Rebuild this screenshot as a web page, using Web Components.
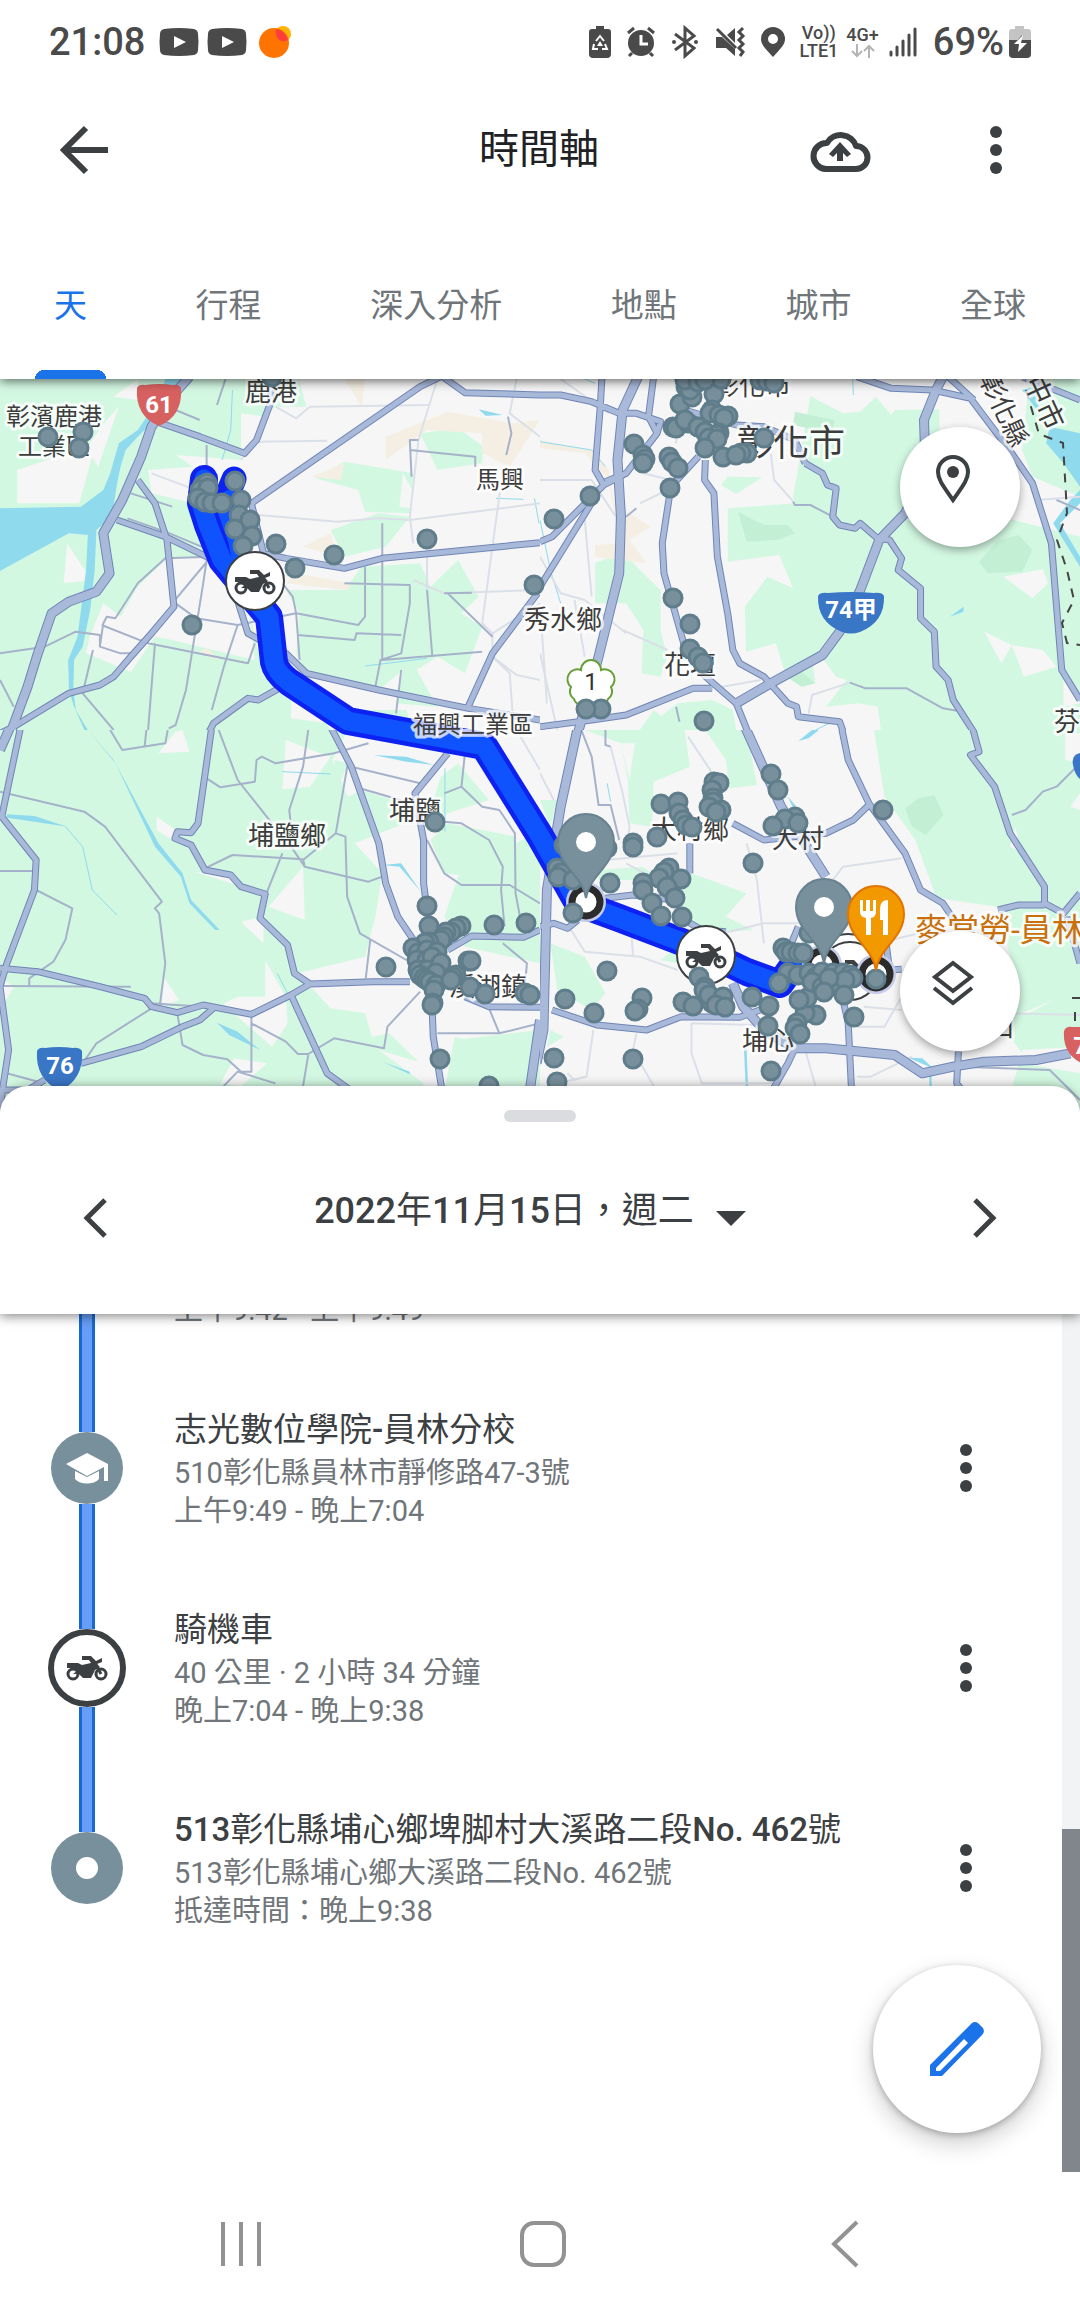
<!DOCTYPE html>
<html lang="zh-Hant">
<head>
<meta charset="utf-8">
<meta name="viewport" content="width=device-width, initial-scale=1">
<title>時間軸</title>
<style>
  body {
    margin: 0;
    min-height: 100vh;
    display: flex;
    flex-direction: column;
    background: #fff;
    color: #3c4043;
    font-family: Roboto, "Noto Sans CJK TC", sans-serif;
    overflow-x: hidden;
  }

  timeline-list {
    flex: 1;
  }

  /* figures are a step heavier than the han characters */
  b {
    font-weight: 500;
  }
</style>
</head>
<body>
<status-bar></status-bar>
<app-header>時間軸</app-header>
<tab-strip>
  <a href="#day" aria-current="page">天</a>
  <a href="#trips">行程</a>
  <a href="#insights">深入分析</a>
  <a href="#places">地點</a>
  <a href="#cities">城市</a>
  <a href="#world">全球</a>
</tab-strip>
<timeline-map></timeline-map>
<date-sheet><span><b>2022</b>年<b>11</b>月<b>15</b>日，週二</span></date-sheet>
<timeline-list>
  <timeline-stop kind="passed">
    <span slot="time">上午9:42 - 上午9:49</span>
  </timeline-stop>
  <timeline-stop kind="place" icon="school">
    <span slot="title">志光數位學院<b>-</b>員林分校</span>
    <span slot="detail">510彰化縣員林市靜修路47-3號</span>
    <span slot="time">上午9:49 - 晚上7:04</span>
  </timeline-stop>
  <timeline-stop kind="move" icon="moto">
    <span slot="title">騎機車</span>
    <span slot="detail">40 公里 · 2 小時 34 分鐘</span>
    <span slot="time">晚上7:04 - 晚上9:38</span>
  </timeline-stop>
  <timeline-stop kind="last" icon="dot">
    <span slot="title"><b>513</b>彰化縣埔心鄉埤脚村大溪路二段<b>No. 462</b>號</span>
    <span slot="detail">513彰化縣埔心鄉大溪路二段No. 462號</span>
    <span slot="time">抵達時間：晚上9:38</span>
  </timeline-stop>
</timeline-list>
<system-nav></system-nav>

<script>
// motorcycle artwork, shared by the list icon and the map markers (42 x 25)
const MOTO = `
  <g fill="none" stroke="#3c4043" stroke-width="3"><circle cx="7" cy="18" r="5"/><circle cx="35" cy="18" r="5"/><path d="M29 7l6 11"/></g>
  <path fill="#3c4043" d="M1 7h11l4 2 9-2-2-3h-7V0h9l5 5 6-3v4l-5 2 3 3-5 3-4 8h-8l-4-4h-6l4-3-4-3H1z"/>`;

// name: [width, height, content]
const ICONS = {
  back: [48, 48, '<path fill="none" stroke="#3c4043" stroke-width="6" d="M48 24H5M26 2 4 24l22 22"/>'],
  cloud: [60, 44, '<path fill="none" stroke="#3c4043" stroke-width="6" stroke-linejoin="round" d="M16 41h30a11 11 0 0 0 0-23A16 16 0 0 0 17 15 13 13 0 0 0 16 41z"/><path fill="#3c4043" d="M30 14 41 26l-4 3-4-4v8h-6v-8l-4 4-4-3z"/>'],
  more: [12, 48, '<g fill="#3c4043"><circle cx="6" cy="6" r="6"/><circle cx="6" cy="24" r="6"/><circle cx="6" cy="42" r="6"/></g>'],
  place: [34, 48, '<path fill="none" stroke="#3c4043" stroke-width="4" d="M17 45C8 32 2 25 2 17a15 15 0 0 1 30 0c0 8-6 15-15 28z"/><circle cx="17" cy="17" r="6" fill="#3c4043"/>'],
  layers: [42, 46, '<path fill="none" stroke="#3c4043" stroke-width="4" d="M21 3 39 17 21 31 3 17zM2 28l19 15 19-15"/>'],
  prev: [24, 40, '<path fill="none" stroke="#3c4043" stroke-width="5" d="M22 2 4 20l18 18"/>'],
  next: [24, 40, '<path fill="none" stroke="#3c4043" stroke-width="5" d="m2 2 18 18L2 38"/>'],
  caret: [30, 15, '<path fill="#3c4043" d="M0 0h30L15 15z"/>'],
  edit: [54, 54, '<path fill="#1a73e8" fill-rule="evenodd" d="M0 43 41 2c3-3 6-2 8 0l3 3c2 2 3 5 0 8L12 54H0zM6 46v3h4l28-28-4-4z"/>'],
  school: [42, 31, '<path fill="#fff" d="M21 0 42 11v17h-4V14L21 23 0 11z"/><path fill="#fff" d="M9 18v8c5 6 19 6 24 0v-8l-12 6z"/>'],
  moto: [42, 25, MOTO],
  dot: [22, 22, '<circle cx="11" cy="11" r="11" fill="#fff"/>'],
  video: [40, 28, '<path fill="#4a4a4a" d="M5 1q15-2 30 0 4 1 4 5 1 8 0 16 0 4-4 5-15 2-30 0-4-1-4-5-1-8 0-16 0-4 4-5z"/><path fill="#fff" d="m15 8 12 6-12 6z"/>'],
  peach: [32, 32, '<circle cx="24" cy="8" r="8" fill="#ffb400"/><circle cx="15" cy="17" r="15" fill="#ff7300"/><path fill="#ff3d3d" d="M17 3a15 15 0 0 1 12 11c-7 4-14-2-12-11z"/>'],
  recycle: [22, 32, '<path fill="#4a4a4a" d="M7 0h8v3h4q3 0 3 3v22q0 4-4 4H4q-4 0-4-4V6q0-3 3-3h4z"/><path fill="none" stroke="#fff" stroke-width="2" d="m7 15 4-5 4 5M5 18l-1 5h5m4 0h5l-2-5"/><path fill="#fff" d="m8 20 3-5 3 5z"/>'],
  alarm: [28, 30, '<circle cx="14" cy="16" r="13" fill="#4a4a4a"/><path fill="none" stroke="#4a4a4a" stroke-width="3" d="M1 6l6-5m14 0 6 5M5 26l-3 3m21-3 3 3"/><path fill="none" stroke="#fff" stroke-width="3" d="M14 8v9h7"/>'],
  bluetooth: [28, 32, '<path fill="none" stroke="#4a4a4a" stroke-width="3" d="m4 8 19 14-9 8V2l9 8L4 24"/><circle cx="3" cy="16" r="2" fill="#4a4a4a"/><circle cx="25" cy="16" r="2" fill="#4a4a4a"/>'],
  mute: [30, 30, '<path fill="#4a4a4a" d="M1 10h6L20 22v7l-9-8H1zM20 1v15l-8-8z"/><path fill="none" stroke="#4a4a4a" stroke-width="3" d="m2 2 19 19M28 1l-4 4 4 4-4 4 4 4-4 4 4 4-3 4"/>'],
  pin: [24, 30, '<path fill="#4a4a4a" fill-rule="evenodd" d="M12 30C5 22 0 18 0 12a12 12 0 0 1 24 0c0 6-5 10-12 18zM12 7a5 5 0 1 0 0 10 5 5 0 0 0 0-10z"/>'],
  arrows: [24, 14, '<path fill="none" stroke="#b4b4b4" stroke-width="2" d="M6 0v12M1 7l5 5 5-5M18 14V2M13 7l5-5 5 5"/>'],
  signal: [28, 30, '<path fill="none" stroke="#4a4a4a" stroke-width="3" stroke-linecap="round" d="M2 25v3M8 20v8M14 14v14M20 8v20M26 2v26"/>'],
  battery: [22, 32, '<path fill="#c4c4c4" d="M6 0h9v3h4q3 0 3 3v10H0V6q0-3 3-3h3z"/><path fill="#4a4a4a" d="M0 14h22v14q0 4-4 4H4q-4 0-4-4z"/><path fill="#4a4a4a" d="M13 9v6H8z"/><path fill="#fff" d="M14 9 5 18h5l-1 8 9-9h-6z"/>'],
  recents: [42, 46, '<path fill="none" stroke="#929292" stroke-width="4" d="M3 1v44M21 1v44M39 1v44"/>'],
  home: [46, 46, '<rect x="2" y="2" width="42" height="42" rx="12" fill="none" stroke="#929292" stroke-width="4"/>'],
  navback: [28, 48, '<path fill="none" stroke="#929292" stroke-width="4" d="M26 2 3 24l23 22"/>']
};

const BUTTON = `
  button, a {
    margin: 0;
    padding: 0;
    border: 0;
    background: none;
    font: inherit;
    color: inherit;
    cursor: pointer;
  }
`;

class UiIcon extends HTMLElement {
  constructor() {
    super();
    this.attachShadow({ mode: 'open' });
  }

  connectedCallback() {
    const [w, h, body] = ICONS[this.getAttribute('name')];
    this.shadowRoot.innerHTML = `
      <style>
        :host { display: block; flex: none; }
        svg { display: block; overflow: visible; }
      </style>
      <svg width="${w}" height="${h}" viewBox="0 0 ${w} ${h}" aria-hidden="true">${body}</svg>
    `;
  }
}
customElements.define('ui-icon', UiIcon);

class StatusBar extends HTMLElement {
  constructor() {
    super();
    this.attachShadow({ mode: 'open' }).innerHTML = `
      <style>
        :host {
          display: flex;
          align-items: center;
          justify-content: space-between;
          height: 84px;
          padding: 0 49px;
          color: #4a4a4a;
          font-size: 38px;
          font-weight: 500;
        }
        div { display: flex; align-items: center; }
        .left { gap: 12px; }
        .left span { margin-right: 2px; }
        .video { gap: 8px; }
        .right { gap: 16px; }
        .net {
          flex-direction: column;
          margin: 0 -6px 0 -2px;
          font-size: 18px;
          line-height: 18px;
        }
        .charge { gap: 5px; }
      </style>
      <div class="left">
        <span>21:08</span>
        <div class="video"><ui-icon name="video"></ui-icon><ui-icon name="video"></ui-icon></div>
        <ui-icon name="peach"></ui-icon>
      </div>
      <div class="right">
        <ui-icon name="recycle"></ui-icon>
        <ui-icon name="alarm"></ui-icon>
        <ui-icon name="bluetooth"></ui-icon>
        <ui-icon name="mute"></ui-icon>
        <ui-icon name="pin"></ui-icon>
        <div class="net"><span>Vo))</span><span>LTE1</span></div>
        <div class="net"><span>4G+</span><ui-icon name="arrows"></ui-icon></div>
        <ui-icon name="signal"></ui-icon>
        <div class="charge"><span>69%</span><ui-icon name="battery"></ui-icon></div>
      </div>
    `;
  }
}
customElements.define('status-bar', StatusBar);

class AppHeader extends HTMLElement {
  constructor() {
    super();
    this.attachShadow({ mode: 'open' }).innerHTML = `
      <style>
        ${BUTTON}
        :host {
          display: grid;
          grid-template-columns: 1fr auto 1fr;
          align-items: center;
          height: 132px;
          padding: 0 78px 0 60px;
        }
        h1 {
          margin: 0;
          padding: 0 0 8px 16px;
          font-size: 40px;
          font-weight: 400;
          color: #202124;
        }
        .nav, .actions {
          display: flex;
          align-items: center;
        }
        .actions {
          justify-content: flex-end;
          gap: 120px;
        }
      </style>
      <div class="nav"><button aria-label="返回"><ui-icon name="back"></ui-icon></button></div>
      <h1><slot></slot></h1>
      <div class="actions">
        <button aria-label="備份"><ui-icon name="cloud"></ui-icon></button>
        <button aria-label="更多選項"><ui-icon name="more"></ui-icon></button>
      </div>
    `;
  }
}
customElements.define('app-header', AppHeader);

class TabStrip extends HTMLElement {
  constructor() {
    super();
    this.attachShadow({ mode: 'open' }).innerHTML = `
      <style>
        :host {
          display: block;
          position: relative;
          z-index: 2;
          background: #fff;
          box-shadow: 0 2px 10px rgba(0, 0, 0, .6);
          clip-path: inset(0 0 -20px 0);
        }
        nav {
          display: flex;
          justify-content: space-between;
          height: 163px;
          padding: 0 54px;
        }
        ::slotted(a) {
          display: flex;
          align-items: center;
          padding-top: 10px;
          font-size: 33px;
          color: #70757a;
          text-decoration: none;
        }
        ::slotted(a[aria-current]) {
          margin: 0 -19px;
          padding-left: 19px;
          padding-right: 19px;
          color: #1a73e8;
          background: radial-gradient(circle at 9px 9px, #1a73e8 9px, transparent 0) 0 100% / 9px 9px no-repeat,
            radial-gradient(circle at 0 9px, #1a73e8 9px, transparent 0) 100% 100% / 9px 9px no-repeat,
            linear-gradient(#1a73e8, #1a73e8) 50% 100% / 54px 9px no-repeat;
        }
      </style>
      <nav><slot></slot></nav>
    `;
  }
}
customElements.define('tab-strip', TabStrip);

// The base map comes in four tiles. Each tile keeps its own coordinate space,
// 1568 units across; shapes are point lists separated by "|".
const TILES = [
  {
    x: 0, y: 370, w: 540, h: 360, vh: 1080,
    green: '0,0 860,0 890,110 800,110 770,140 700,130 700,270 510,255 560,290 430,300 440,370 560,400 620,560 720,700 760,900 900,980 960,1080 0,1080|915,325 1000,275 1200,310 1190,430 1060,425 1040,360|1220,190 1330,175 1405,230 1400,280 1270,300|960,480 1100,430 1190,440 1120,530 1000,560|830,660 1000,660 1050,590 1220,580 1250,650 1330,570 1390,680 1340,730 1400,770 1350,910 1270,860 1210,900 1270,1010 1150,1000 1170,900 1100,960 880,900 860,850 870,730|1040,1020 1180,1020 1190,1060 1060,1050',
    dark: '',
    land: '330,80 400,27 400,90|310,150 345,110 285,290 250,235|50,300 240,235 270,250 230,400 50,400|195,520 265,630 185,640|400,650 490,560 600,560 720,700 740,870 500,810 450,800 380,905 250,850 260,800 300,700 350,740|845,980 900,1000 950,1060 845,1045|1170,310 1230,420 1160,410',
    beige: '1000,27 1060,27 1050,110|1120,200 1300,125 1490,160 1568,150 1480,290 1400,250 1400,190 1240,180 1120,270|905,320 1000,280 990,330|880,530 960,490 980,560|860,610 1020,640 1010,660 830,640|570,850 600,835 640,870',
    water: '0,415 235,410 300,360 320,310 345,220 400,180 420,150 470,60 480,27 540,27 440,160 400,200 365,240 350,290 340,340 325,440 280,480 275,600 262,720 240,830 215,870 213,960 220,1020 255,1080 245,1080 215,1010 200,960 198,870 225,800 250,600 255,495 200,490 0,603|1390,118 1460,135 1410,137',
    stream: '675,60 670,180 645,270|1505,150 1568,200|1440,385 1520,388|1552,385 1565,460|1060,888 1240,865',
    light: '800,110 860,145 900,110 1250,105|750,215 950,212|750,435 980,455 1100,445 1190,450 1568,400|1270,27 1215,210 1190,440 1200,520|1500,27 1480,130 1568,200|1460,300 1400,760 1430,790 1430,850|1430,790 1568,700|1430,860 1480,910 1490,1050|1430,860 1500,915 1568,930|1240,560 1240,660|440,310 620,380|1200,630 1290,670 1560,660|700,270 740,215',
    minor: '0,850 130,830 220,785 290,795 290,830 350,850 390,850|290,830 300,760 310,740 335,745 400,640 480,565 610,560|600,225 600,290|510,120 580,150|630,105 655,27|510,700 570,745 690,765 860,730 1040,765 1060,740 1060,590|600,570 590,640 540,960 510,1065 490,1075|450,820 430,1080|295,765 430,820 720,880 740,820|790,600 850,680 860,730 870,870|865,795 1030,810 1035,790 1165,795|1000,640 1190,645 1190,700 1165,850 1105,870 1090,950|1110,460 1110,870 1400,845|1190,240 1380,260 1380,290|1215,210 1190,210 1195,320|1240,660 1255,855|1475,140 1485,190 1470,255|1290,670 1370,668|270,840 240,970 330,1080|0,930 40,1010|620,570 700,700|690,765 650,890 615,1020|380,370 500,410|1165,900 1150,1030|1300,670 1430,800|605,570 500,700|370,445 480,485 620,545',
    road: '400,330 450,400 485,510 505,710 440,790 380,860 330,920 290,945 200,970 40,1070 0,1090|440,150 580,200 710,250 745,210 785,100 790,27|340,450 480,500 640,580 680,660 720,790 790,830 830,850 890,910 1100,960 1360,1015 1568,1050|1280,20 1220,50 730,400 765,550 830,565 1000,595 1110,565 1568,518|1285,20 1350,68 1568,75|1568,660 1430,850 1355,1020|810,955 750,990 720,985 620,1060 605,1090',
    wide: '550,20 490,90 440,170 410,260 355,390 300,490 318,610 280,665 200,695 150,730 110,850 80,950 30,1090',
    dots: '140,200 240,187 229,235 790,20 590,345 600,340 580,360 605,355 575,385 595,395 615,400 645,400 683,333 700,390 695,435 727,450 683,478 733,498 707,527 801,523 857,595 971,556 1241,506 558,766 1550,644'
  },
  {
    x: 540, y: 370, w: 540, h: 360, vh: 1080,
    green: '785,78 880,130 930,125 975,80 1020,135 1030,120 1160,118 1160,220 1300,430 1568,500 1568,1080 990,1080 980,1010 925,1000 830,1010 890,930 860,920 810,850 790,870 800,940 760,950 715,920 685,820 598,845 595,710 660,620 735,655 695,555 545,575 545,415 740,400 735,380|1420,27 1568,27 1568,380 1430,320 1400,240|525,345 545,320 645,322 570,372|160,580 240,545 290,600 350,660 350,780 370,860 350,920 295,910 300,780 250,700 160,700|300,1080 400,1000 500,990 560,1020 570,1080|290,1080 330,1020 400,1080',
    dark: '575,425 650,465 720,465 740,490 690,510 600,515|740,125 855,150 850,190 735,165|1275,575 1330,510 1390,495 1430,540 1400,605 1300,610|715,920 760,905 800,940 760,950',
    land: '1345,620 1460,597 1475,640 1430,685|1290,785 1370,825 1340,880|1370,825 1460,840 1500,890 1405,920|1520,930 1568,1000 1520,1010|1400,330 1568,380 1568,400 1430,445 1380,430',
    beige: '0,210 150,240 200,300 215,400 320,470 260,510 310,580 160,560 160,525 230,520 200,330 130,250 0,235',
    water: '1480,170 1568,190 1568,350 1520,280 1470,220|1568,360 1540,390 1490,460 1568,590 1568,560 1510,460 1568,400|1190,740 1230,710 1230,725|1400,60 1440,50 1450,130',
    stream: '908,27 910,75|0,215 150,240 190,290|0,450 30,600 60,700|800,1080 860,1050|130,27 160,40',
    light: '670,250 680,330 740,400|0,330 150,330 220,440|130,450 150,680|240,780 370,840|780,1030 790,975 900,938|530,950 640,930|0,560 60,670 130,690 250,790|290,400 370,360|0,700 20,1000|0,850 50,1080|395,220 400,170|60,27 200,130|300,310 380,330|1440,390 1568,380|100,690 130,860',
    minor: '735,395 740,405 785,405 850,440|900,938 945,955 1065,955 1170,1015 1210,1022|395,1010 405,1055|250,440 280,415|1500,390 1568,420',
    road: '180,20 175,110 160,300 185,345|330,20 315,140 340,190 250,310 190,335|0,75 60,75 150,95 230,130 280,130 350,155 340,190|460,260 380,350 355,520 360,610 420,830 470,910 570,1000 605,1090|480,270 478,330 505,370 515,560 545,730 560,840 580,880 650,920 720,1000 745,1010 750,1040 870,1055 882,1090|920,20 1020,55 1140,60 1250,85 1370,250 1430,340 1485,520 1515,900 1568,990|1185,20 1260,90|770,280 820,310 835,345 860,355 850,440 870,465 915,475 930,460 980,505 1015,510 1050,565 1040,600 1105,655 1105,745 1145,785 1150,890 1185,930 1200,990 1262,1090|0,1070 150,1050 250,1035 445,955 500,955|0,515 35,500 185,345 250,310|0,650 155,390|420,120 570,165 650,170 740,210 770,280|1400,20 1568,90|430,130 480,180',
    wide: '285,20 240,120 225,270 235,440 230,610 170,860 110,1090|570,1000 670,940 820,855 870,785 930,660 985,510 1060,430 1120,300 1115,150 1150,60 1170,20',
    dots: '273,223 300,255 305,268 298,278 146,378 41,447 376,260 382,275 400,295 378,355 407,102 425,50 440,80 437,60 505,73 525,27 420,30 460,35 480,30 500,120 495,130 520,135 545,137 535,145 385,170 395,173 430,160 420,150 460,170 480,185 520,190 515,195 490,205 513,207 478,235 600,250 530,260 585,250 570,255 650,205 640,30 660,32 680,38 385,685 435,763 435,838 460,860 473,880 178,1016 135,1016 477,1053'
  },
  {
    x: 0, y: 730, w: 540, h: 380, vh: 1140,
    green: '0,0 1568,0 1568,1140 0,1140',
    dark: '',
    land: '455,260 510,300 500,330 455,300|460,70 510,5 530,0 550,65|830,30 905,60 960,80 900,170 820,178|565,425 680,440 715,475|780,530 880,410 885,570|700,575 765,560 765,640|965,90 1010,0 1568,0 1568,300 1480,350 1330,440 1290,560 1350,650 1568,700 1568,900 1320,930 1300,1140 1240,1140 1220,1000 1130,910 1080,920 1060,850 960,835 865,730 1060,680 1090,560 1110,430 1030,340 1200,270 1100,220 1010,200|475,740 520,810 470,830|770,690 830,800 770,800|690,800 830,800 835,880 790,950 690,860 650,820|680,985 775,1000 700,1068 640,1060|0,740 40,770 0,840|1100,960 1230,1000 1240,1068',
    greenTop: '1250,330 1300,280 1400,300 1500,320 1480,470 1370,440 1290,430|1350,500 1440,445 1560,490 1568,620 1480,610 1320,560|1320,920 1450,955 1568,910 1490,1068 1490,1140 1280,1140|1280,140 1330,100 1420,210 1330,240 1240,270|1010,200 1050,180 1200,230 1180,260|970,90 1010,100 980,180',
    beige: '',
    water: '255,0 330,90 460,340 530,430 555,510 638,600 625,600 550,520 525,440 450,350 335,100|20,253 100,258 195,290 100,275 20,263|630,878 690,905 755,960 665,915|1085,75 1180,80 1260,105 1180,95|1110,405 1165,400 1222,485 1160,410|1110,995 1190,1025 1190,1033',
    stream: '190,290 240,350 268,480 340,555|1292,115 1292,305|820,125 960,132|805,730 840,800',
    light: '1500,0 1568,120',
    minor: '0,185 245,245 305,290 470,515 450,535 462,550 480,700 465,820|0,423 100,423|105,480 210,535 190,630 155,695 85,745 85,770|10,768 380,770|440,820 510,825 600,830|240,1000 280,940 440,835|515,850 530,945 590,975 660,988 700,1025 730,1025 730,850|730,880 830,935 865,972 895,972 970,925 1115,955 1125,890 1220,785|895,975 880,1068|320,0 355,60 480,40 487,0|420,50 425,0|635,0 690,150 790,280|600,145 640,172 740,155 745,90 760,80 800,100 970,70 1070,40|895,0 880,110 840,240 845,290|595,415 675,375 880,388 885,410 1070,455 1110,440|820,370 770,500|845,350 885,410|880,390 975,310 1010,100|975,310 1003,320 1008,500 1045,610 1180,690|1075,630 1062,745|1020,110 1220,160|1045,175 1180,215|1350,70 1340,170 1290,190|1340,170 1400,230 1450,240 1495,310 1497,490 1510,560|1290,275 1340,280 1420,330 1460,410 1455,480 1465,590|1240,330 1290,430 1340,465 1480,465 1568,520|1460,640 1530,700 1525,760|1270,910 1450,910 1568,880|1420,835 1450,910|20,1030 110,1055|650,1068 690,1025 800,1060',
    road: '60,-10 5,260 105,390 100,480 20,700 0,770 25,960 10,1060 0,1140|0,715 110,725 290,770 420,805 440,830 515,848 590,825 730,853 845,795 900,762 1080,755 1190,755|615,-10 575,280 555,308 515,305 508,325 555,345 595,420 670,435 700,470 770,492 755,565 835,645 855,730 900,762|960,-10 1020,110 1100,340 1120,460 1155,560 1220,660|1300,70 1205,190 1230,330 1230,460 1240,540|1300,660 1370,618 1520,622 1568,600|1350,800 1420,830 1568,832|1255,840 1258,920 1285,1090|845,795 950,1030 1030,1090|235,1000 410,950 530,890 580,870 625,830|130,1050 80,1080 0,1080',
    wide: '1568,870 1530,1140|30,-10 0,60',
    dots: '1263,275 1239,527 1245,587 1340,587 1325,595 1310,605 1295,605 1290,620 1280,630 1245,635 1235,640 1200,653 1215,670 1240,660 1270,665 1210,690 1240,690 1270,695 1255,680 1215,720 1240,720 1220,735 1280,700 1265,730 1230,745 1240,750 1250,755 1265,765 1260,780 1256,820 1253,825 1325,735 1315,740 1310,750 1365,772 1408,792 1525,790 1538,795 1360,692 1368,694 1433,585 1526,580 1121,712 1277,988 1421,1068'
  },
  {
    x: 540, y: 730, w: 540, h: 380, vh: 1140,
    green: '130,0 420,0 435,110 330,155 325,290 260,280 255,150 235,40|480,0 600,0 630,165 550,175 540,90|970,0 1568,0 1568,1140 1350,1140 1400,970 1350,900 1370,700 1330,530 1190,510 1150,500 1090,330 1000,200|440,430 600,490 540,560 620,600 560,605 440,590 370,450|170,420 300,410 350,450 170,450|30,640 130,680 190,790 150,840 50,780|350,690 400,650 400,700|0,210 50,210 30,290|30,900 70,920 20,950',
    dark: '1060,235 1100,205 1145,195 1172,255 1120,315 1080,290',
    land: '1380,290 1400,370 1365,350|1400,850 1490,810 1420,850|1525,10 1568,10 1568,100 1525,90|1540,230 1568,190 1568,240|1400,960 1568,950 1568,1030 1400,1000|235,40 275,40 260,150 255,130',
    beige: '',
    water: '750,33 790,0 810,0 780,25|720,200 745,230 735,235|592,950 600,960 604,1068 597,1068|1070,983 1110,985 1137,1010 1137,1068 1131,1068 1130,1010',
    stream: '195,160 205,215',
    light: '0,130 40,210|205,50 240,190 260,290 250,370|430,20 520,160|530,610 650,580 750,580|600,340 630,450 650,640|850,450 880,410 1050,385|90,600 130,665 290,680 400,720|265,600 270,680|155,900 135,1040 50,1060|440,880 440,970 470,1060 700,1060|280,910 270,960 330,1068|770,960 800,1068|920,1040 960,1040 1080,980|920,890 1000,890 1050,800|1370,850 1568,855|190,390 400,370|1020,630 1100,610|1140,1030 1220,990|440,880 620,885|940,830 1050,840|250,400 340,450|80,1030 100,1050 130,1040',
    minor: '120,0 150,80 170,225 205,225 230,330|1370,255 1410,240 1460,185 1500,170 1568,100|190,0 190,45 205,50|1220,1010 1480,1020 1568,1110',
    road: '875,-10 895,90 955,220 1060,370 1105,480 1170,520 1215,590|955,225 910,270 830,310 650,330 560,280|435,340 435,430|190,505 270,495 390,510|0,590 40,580 80,595 110,570|420,570 470,600 540,605|35,840 165,885 310,900 410,860 580,862 665,830|740,955 720,1000 670,1090|880,810 895,880 905,1090|750,590 730,640|1255,-10 1275,65 1250,75 1320,170 1365,310 1465,470 1465,520 1520,550 1568,490|1465,525 1390,525 1330,540|1530,560 1568,700|1215,965 1210,1060 1240,1100|1000,600 1015,720 1050,718',
    wide: '110,-10 60,230 20,480 10,900 -10,1000|595,-10 700,230 830,440|560,760 590,830 650,900 740,955 830,955 1030,975 1110,1030 1200,1010 1290,995 1440,990 1540,970',
    dots: '672,133 692,180 995,240 352,223 402,217 340,322 270,340 270,350 405,250 415,270 425,285 440,292 505,155 520,158 500,180 503,205 503,215 490,230 525,240 512,247 740,262 710,268 678,287 748,280 619,398 204,460 50,415 60,430 53,440 95,450 70,345 195,355 95,550 375,415 360,425 345,445 300,460 300,480 410,448 370,470 392,503 325,520 350,557 413,560 195,723 72,807 158,850 295,803 285,838 275,843 463,742 480,770 475,780 415,817 445,827 500,820 490,795 530,800 510,825 537,832 617,800 665,827 720,730 695,760 662,888 670,1022 270,988 41,985 48,1055 913,860 800,855 770,850 775,805 752,810 745,880 740,895 755,912 705,655 715,665 730,665 750,670 765,668 780,610 750,735 780,730 800,740 820,725 850,730 880,730 900,735 910,745 790,755 820,770 850,760 870,765 885,750 840,745 825,785 883,795 975,748'
  }
];

// text, centre x, centre y, size
const LABELS = [
  ['彰濱鹿港', 54, 417, 24], ['工業區', 54, 447, 24], ['鹿港', 271, 392, 26], ['馬興', 500, 480, 24],
  ['秀水鄉', 563, 620, 26], ['福興工業區', 473, 725, 24], ['花壇', 690, 665, 26], ['彰化市', 791, 444, 36],
  ['彰化市', 752, 386, 26], ['芬', 1067, 722, 26], ['埔鹽鄉', 287, 836, 26], ['埔鹽', 415, 811, 26],
  ['溪湖鎮', 488, 987, 26], ['大村鄉', 690, 830, 26], ['大村', 798, 839, 26], ['埔心', 768, 1041, 26],
  ['山', 1001, 1027, 26]
];

const ROUTE = 'M204 479 201 503 208 525 222 560 241 583 269 617 274 662Q276 672 289 682L348 721 484 746 540 836 578 903 619 918 695 947 747 972 780 984 797 960';
const BRANCH = 'M234 479 224 503 236 540 245 585';

const path = list => list ? list.split('|').map(p => 'M' + p).join('') : '';

function drawTile(t) {
  const fill = (list, color) => `<path fill="${color}" d="${path(list)}"/>`;
  const line = (list, color, width) =>
    `<path fill="none" stroke="${color}" stroke-width="${width}" stroke-linejoin="round" vector-effect="non-scaling-stroke" d="${path(list)}"/>`;
  return `
    <svg x="${t.x}" y="${t.y}" width="${t.w}" height="${t.h}" viewBox="0 0 1568 ${t.vh}" preserveAspectRatio="none">
      ${fill(t.green, '#d3f8e2')}${fill(t.dark, '#c3f0d5')}${fill(t.land, '#f6f6f6')}
      ${fill(t.greenTop, '#d3f8e2')}${fill(t.beige, '#f5efe3')}${fill(t.water, '#90daee')}
      ${line(t.stream, '#90daee', 1)}${line(t.light, '#dbe0e8', 2)}${line(t.minor, '#a5b2c9', 2)}
      ${line(t.road, '#7085b5', 7)}${line(t.wide, '#7085b5', 10)}
      ${line(t.road, '#a9b9d9', 5)}${line(t.wide, '#a9b9d9', 8)}
    </svg>`;
}

function drawDots(t) {
  return t.dots.split(' ').map(p => {
    const [x, y] = p.split(',').map(Number);
    return `<circle cx="${Math.round(t.x + x * t.w / 1568)}" cy="${Math.round(t.y + y * t.h / t.vh)}" r="9"/>`;
  }).join('');
}

const rider = (x, y) => `
  <g transform="translate(${x} ${y})">
    <circle r="29" fill="#fff" stroke="#3c4043" stroke-width="2"/>
    <g transform="translate(-21 -11)">${MOTO}</g>
  </g>`;

const ring = (x, y) => `
  <circle cx="${x}" cy="${y}" r="20" fill="#c5cbe8"/>
  <circle cx="${x}" cy="${y}" r="14" fill="#fff" stroke="#2b2b2b" stroke-width="7"/>`;

const pin = (x, y, color, edge, inner) => `
  <g transform="translate(${x} ${y})">
    <path fill="${color}" stroke="${edge}" stroke-width="2" d="M0 56C-3 34-28 24-28 0a28 28 0 0 1 56 0C28 24 3 34 0 56z"/>
    ${inner}
  </g>`;

class MapButton extends HTMLElement {
  constructor() {
    super();
    this.attachShadow({ mode: 'open' }).innerHTML = `
      <style>
        ${BUTTON}
        :host { display: block; }
        button {
          display: flex;
          align-items: center;
          justify-content: center;
          box-sizing: border-box;
          width: 120px;
          height: 120px;
          padding: 0 14px 16px 0;
          border-radius: 50%;
          background: #fff;
          box-shadow: 0 3px 8px rgba(0, 0, 0, .35);
        }
      </style>
      <button><slot></slot></button>
    `;
  }

  connectedCallback() {
    this.shadowRoot.querySelector('button').setAttribute('aria-label', this.getAttribute('label'));
  }
}
customElements.define('map-button', MapButton);

class TimelineMap extends HTMLElement {
  constructor() {
    super();
    const labels = LABELS.map(([text, x, y, size]) =>
      `<text x="${x}" y="${y}" font-size="${size}">${text}</text>`).join('');
    this.attachShadow({ mode: 'open' }).innerHTML = `
      <style>
        :host {
          display: block;
          position: relative;
          background: #f6f6f6;
        }
        svg { display: block; }
        .map { width: 100%; height: auto; }
        text {
          text-anchor: middle;
          dominant-baseline: central;
          fill: #3c3c3c;
        }
        .labels text, .poi {
          stroke: #fff;
          stroke-opacity: .75;
          stroke-width: 6px;
          stroke-linejoin: round;
          paint-order: stroke;
        }
        .shields text {
          fill: #fff;
          font-size: 24px;
          font-weight: 700;
        }
        .shields .park {
          fill: #333;
          font-weight: 400;
        }
        .poi {
          fill: #c9700c;
          font-size: 32px;
          text-anchor: start;
        }
        .controls {
          position: absolute;
          top: 48px;
          right: 60px;
          bottom: 59px;
          display: flex;
          flex-direction: column;
          justify-content: space-between;
        }
      </style>
      <svg class="map" viewBox="0 379 1080 731" role="img" aria-label="地圖">
        ${TILES.map(drawTile).join('')}
        <path fill="none" stroke="#444" stroke-width="2" stroke-dasharray="9 8" d="M1026 390 1039 434 1063 443 1067 513 1057 540 1067 570 1074 600 1062 623 1067 643 1080 645M1072 998h8M1075 1012v14"/>

        <g fill="none" stroke-linejoin="round" stroke-linecap="round">
          <path stroke="#0d22f0" stroke-width="28" d="${ROUTE}"/>
          <path stroke="#0d22f0" stroke-width="25" d="${BRANCH}"/>
          <path stroke="#0f53ff" stroke-width="19" d="${ROUTE}"/>
          <path stroke="#0f53ff" stroke-width="16" d="M229 498 224 506 236 540 245 585"/>
        </g>

        <g class="labels">
          ${labels}
          <text font-size="26" transform="translate(1004 410) rotate(65)">彰化縣</text>
          <text font-size="28" transform="translate(1038 390) rotate(65)">台中市</text>
        </g>
        <text class="poi" x="915" y="930">麥當勞-員林</text>

        <g class="shields">
          <path fill="#d66160" d="M137 388q2-4 8-3 14-2 28 0 6-1 8 3 2 28-22 38-24-10-22-38z"/>
          <text x="159" y="405">61</text>
          <path fill="#3a76c6" d="M37 1051q2-4 8-3 14-2 28 0 6-1 9 3 2 28-22 40-25-12-23-40z"/>
          <text x="60" y="1066">76</text>
          <path fill="#3a76c6" d="M818 596q2-4 10-3 23-2 46 0 8-1 10 3 1 26-24 36-9 3-18 0-25-10-24-36z"/>
          <text x="851" y="610">74甲</text>
          <path fill="#d66160" d="M1064 1031q2-5 8-4h20v40q-30-8-28-36z"/>
          <text x="1087" y="1046">76</text>
          <path fill="#3a76c6" d="M1080 753q-9 2-7 12 2 10 7 14z"/>
          <path fill="#fff" stroke="#689f38" stroke-width="2" d="M581 670a10 10 0 0 1 20 0 10 10 0 0 1 10 17 9 9 0 0 1-3 12q-2 6-8 6h-18q-6 0-8-6a9 9 0 0 1-3-12 10 10 0 0 1 10-17z"/>
          <text class="park" x="591" y="682">1</text>
        </g>

        ${rider(848, 963)}${rider(850, 971)}${rider(706, 955)}
        ${ring(586, 902)}${ring(822, 965)}${ring(876, 974)}
        <g fill="#78909c" stroke="#607d8b" stroke-width="3">${TILES.map(drawDots).join('')}</g>
        ${rider(255, 581)}
        ${pin(586, 842, '#78909c', '#69828f', '<circle r="10" fill="#fff"/>')}
        ${pin(824, 907, '#78909c', '#69828f', '<circle r="10" fill="#fff"/>')}
        ${pin(876, 914, '#f29900', '#e37400', '<path fill="#fff" d="M-16-14h3v11h3v-11h4v11h3v-11h3V-2q0 5-5 6v17h-5V4q-6-1-6-6zM12-14v35H7V6H4V-5q0-9 8-9z"/>')}
      </svg>
      <div class="controls">
        <map-button label="地點"><ui-icon name="place"></ui-icon></map-button>
        <map-button label="圖層"><ui-icon name="layers"></ui-icon></map-button>
      </div>
    `;
  }
}
customElements.define('timeline-map', TimelineMap);

class DateSheet extends HTMLElement {
  constructor() {
    super();
    this.attachShadow({ mode: 'open' }).innerHTML = `
      <style>
        ${BUTTON}
        :host {
          display: flex;
          flex-direction: column;
          align-items: center;
          position: relative;
          z-index: 1;
          box-sizing: border-box;
          height: 228px;
          margin-top: -24px;
          padding-top: 24px;
          border-radius: 28px 28px 0 0;
          background: #fff;
          box-shadow: 0 2px 12px rgba(0, 0, 0, .5);
        }
        .handle {
          width: 72px;
          height: 12px;
          border-radius: 6px;
          background: #dadce0;
        }
        .row {
          display: flex;
          justify-content: space-between;
          align-self: stretch;
          align-items: center;
          height: 192px;
          padding: 0 83px;
        }
        .date {
          display: flex;
          align-items: center;
          gap: 22px;
          padding: 0 20px 22px 0;
          font-size: 36px;
        }
        .date ui-icon { padding-top: 22px; }
      </style>
      <div class="handle"></div>
      <div class="row">
        <button aria-label="前一天"><ui-icon name="prev"></ui-icon></button>
        <button class="date"><slot></slot><ui-icon name="caret"></ui-icon></button>
        <button aria-label="後一天"><ui-icon name="next"></ui-icon></button>
      </div>
    `;
  }
}
customElements.define('date-sheet', DateSheet);

class TimelineStop extends HTMLElement {
  constructor() {
    super();
    this.attachShadow({ mode: 'open' });
  }

  connectedCallback() {
    const icon = this.getAttribute('icon');
    this.shadowRoot.innerHTML = `
      <style>
        ${BUTTON}
        :host {
          display: flex;
          height: 200px;
          padding: 0 90px 0 48px;
        }
        :host([kind="passed"]) { height: 77px; }
        .rail {
          flex: none;
          display: flex;
          flex-direction: column;
          align-items: center;
          width: 78px;
          margin-right: 48px;
        }
        .rail::before, .rail::after {
          content: "";
          flex: 1;
          box-sizing: border-box;
          width: 16px;
          border: solid #1967d2;
          border-width: 0 3px;
          background: #669df6;
        }
        :host([kind="last"]) .rail::after { visibility: hidden; }
        .badge {
          display: flex;
          align-items: center;
          justify-content: center;
          box-sizing: border-box;
          width: 72px;
          height: 72px;
          border-radius: 50%;
          background: #78909c;
        }
        :host([kind="move"]) .badge {
          width: 78px;
          height: 78px;
          border: 6px solid #3c4043;
          background: #fff;
        }
        .text {
          flex: 1;
          display: flex;
          flex-direction: column;
          justify-content: center;
          font-size: 29px;
          line-height: 38px;
          color: #70757a;
        }
        :host([kind="passed"]) .text { justify-content: flex-start; }
        .title {
          font-size: 33px;
          line-height: 48px;
          color: #3c4043;
        }
        button { align-self: center; }
      </style>
      <div class="rail">${icon ? `<div class="badge"><ui-icon name="${icon}"></ui-icon></div>` : ''}</div>
      <div class="text">
        ${icon ? '<div class="title"><slot name="title"></slot></div><div><slot name="detail"></slot></div>' : ''}
        <div><slot name="time"></slot></div>
      </div>
      ${icon ? '<button aria-label="更多選項"><ui-icon name="more"></ui-icon></button>' : ''}
    `;
  }
}
customElements.define('timeline-stop', TimelineStop);

class TimelineList extends HTMLElement {
  constructor() {
    super();
    this.attachShadow({ mode: 'open' }).innerHTML = `
      <style>
        ${BUTTON}
        :host {
          display: flex;
          position: relative;
          overflow: hidden;
        }
        /* the first stop is scrolled partly under the date sheet */
        .stops {
          flex: 1;
          margin-top: -23px;
        }
        .scrollbar {
          display: flex;
          flex-direction: column;
          justify-content: flex-end;
          width: 18px;
          background: #f1f3f4;
        }
        .thumb {
          height: 40%;
          background: #80868b;
        }
        .edit {
          position: absolute;
          right: 39px;
          bottom: 39px;
          display: flex;
          align-items: center;
          justify-content: center;
          width: 168px;
          height: 168px;
          border-radius: 50%;
          background: #fff;
          box-shadow: 0 10px 24px rgba(0, 0, 0, .2), 0 2px 6px rgba(0, 0, 0, .25);
        }
      </style>
      <div class="stops"><slot></slot></div>
      <div class="scrollbar"><div class="thumb"></div></div>
      <button class="edit" aria-label="編輯"><ui-icon name="edit"></ui-icon></button>
    `;
  }
}
customElements.define('timeline-list', TimelineList);

class SystemNav extends HTMLElement {
  constructor() {
    super();
    this.attachShadow({ mode: 'open' }).innerHTML = `
      <style>
        ${BUTTON}
        :host {
          display: grid;
          grid-template-columns: repeat(3, 1fr);
          height: 144px;
          padding: 0 84px 0 90px;
        }
        button {
          display: flex;
          align-items: center;
          justify-content: center;
        }
      </style>
      <button aria-label="最近"><ui-icon name="recents"></ui-icon></button>
      <button aria-label="主畫面"><ui-icon name="home"></ui-icon></button>
      <button aria-label="返回"><ui-icon name="navback"></ui-icon></button>
    `;
  }
}
customElements.define('system-nav', SystemNav);
</script>
</body>
</html>
